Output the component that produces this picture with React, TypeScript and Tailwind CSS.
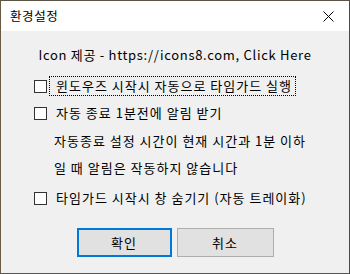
import React from "react";

function Box() {
  return <span className="block w-[13px] h-[13px] border border-[#333333] bg-white shrink-0" />;
}

export default function App() {
  const font = { fontFamily: '"Noto Sans CJK KR", "Noto Sans", sans-serif' };
  return (
    <div
      className="w-[350px] h-[274px] flex flex-col border border-[#5b5446] border-l-[#6b5a42] border-r-[#4a4a4a] border-b-[#555555] text-[13px] tracking-[1px] text-black bg-[#f0f0f0] overflow-hidden"
      style={font}
    >
      {/* title bar */}
      <div className="h-[30px] bg-white flex items-center justify-between pl-[9px] pr-[14px] shrink-0">
        <span className="text-[12.5px] leading-none tracking-[0.6px]">환경설정</span>
        <svg width="11" height="11" viewBox="0 0 11 11" className="mr-[1px]">
          <path d="M0.5 0.5 L10.5 10.5 M10.5 0.5 L0.5 10.5" stroke="#000" strokeWidth="1" />
        </svg>
      </div>

      {/* body */}
      <div className="flex-1 flex flex-col pl-[33px]">
        <div className="mt-[14px] h-[20px] flex items-center justify-center -ml-[33px] tracking-[0.7px]">
          Icon 제공 - https://icons8.com, Click Here
        </div>

        <div className="mt-[11px] h-[20px] flex items-center">
          <Box />
          <span className="ml-[2px] h-[20px] flex items-center pl-[6px] pr-[3px] border border-dotted border-black">
            윈도우즈 시작시 자동으로 타임가드 실행
          </span>
        </div>

        <div className="mt-[7px] h-[20px] flex items-center">
          <Box />
          <span className="ml-[9px]">자동 종료 1분전에 알림 받기</span>
        </div>

        <div className="mt-[8px] h-[20px] flex items-center pl-[20px]">
          자동종료 설정 시간이 현재 시간과 1분 이하
        </div>
        <div className="mt-[7px] h-[20px] flex items-center pl-[20px]">
          일 때 알림은 작동하지 않습니다
        </div>

        <div className="mt-[10px] h-[20px] flex items-center">
          <Box />
          <span className="ml-[9px]">타임가드 시작시 창 숨기기 (자동 트레이화)</span>
        </div>

        <div className="mt-[20px] flex justify-center gap-[5px] -ml-[33px]">
          <button className="w-[95px] h-[29px] bg-[#e1e1e1] border-2 border-[#0078d7] flex items-center justify-center">
            확인
          </button>
          <button className="w-[97px] h-[29px] bg-[#e1e1e1] border border-[#adadad] flex items-center justify-center">
            취소
          </button>
        </div>
      </div>
    </div>
  );
}
